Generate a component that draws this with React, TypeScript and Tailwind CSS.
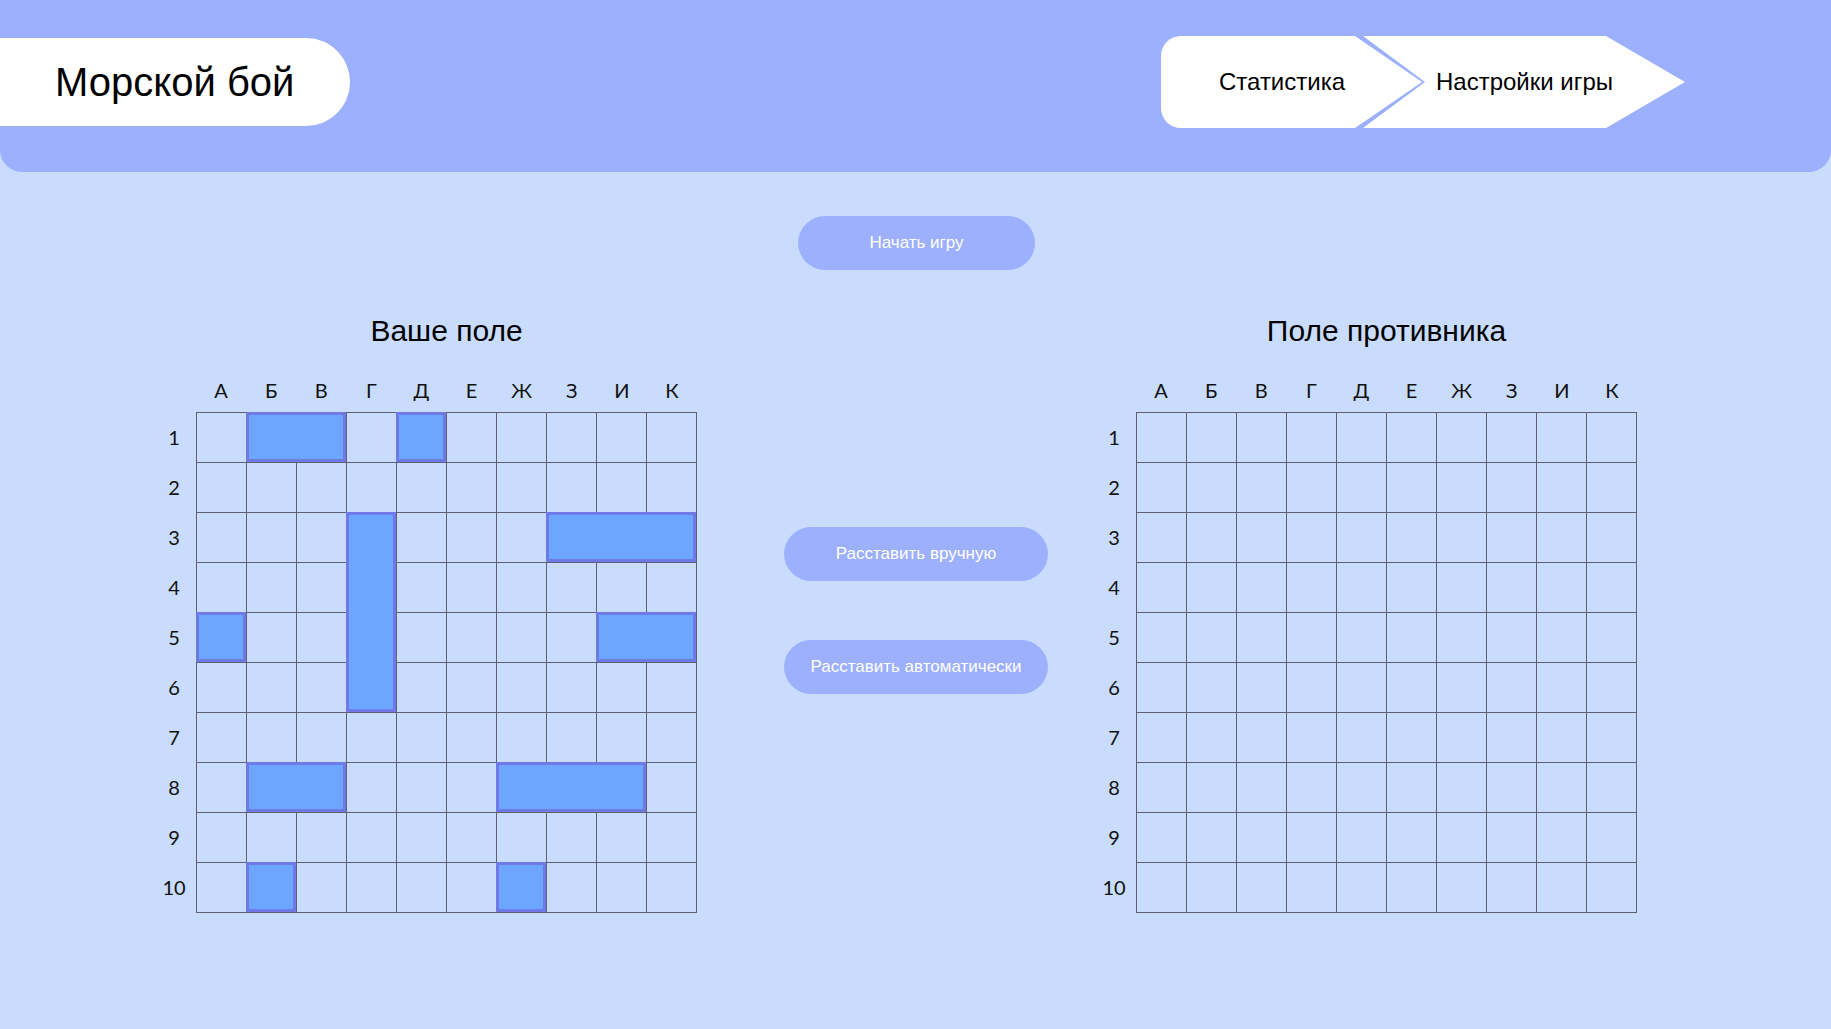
const COLS = ["А", "Б", "В", "Г", "Д", "Е", "Ж", "З", "И", "К"];
const ROWS = [1, 2, 3, 4, 5, 6, 7, 8, 9, 10];

type Ship = { c: number; r: number; len: number; vertical?: boolean };

const myShips: Ship[] = [
  { c: 1, r: 0, len: 2 },
  { c: 4, r: 0, len: 1 },
  { c: 3, r: 2, len: 4, vertical: true },
  { c: 7, r: 2, len: 3 },
  { c: 0, r: 4, len: 1 },
  { c: 8, r: 4, len: 2 },
  { c: 1, r: 7, len: 2 },
  { c: 6, r: 7, len: 3 },
  { c: 1, r: 9, len: 1 },
  { c: 6, r: 9, len: 1 },
];

const arial = "[font-family:'Liberation_Sans',Arial,sans-serif]";
const labelFont = "[font-family:Lato,'Noto_Sans',sans-serif]";

function Field({ title, ships }: { title: string; ships: Ship[] }) {
  return (
    <div className="grid grid-cols-[44px_501px]">
      <div />
      <h2 className={`${arial} text-center text-[30px] leading-[36px] text-black`}>{title}</h2>

      <div />
      <div className={`${labelFont} mt-[29px] mb-[10px] grid grid-cols-10 text-[20px] leading-[24px] text-[#111]`}>
        {COLS.map((c) => (
          <div key={c} className="text-center">{c}</div>
        ))}
      </div>

      <div className={`${labelFont} flex flex-col text-[20px] text-[#111]`}>
        {ROWS.map((n) => (
          <div key={n} className="h-[50px] flex items-center justify-center">{n}</div>
        ))}
      </div>
      <div className="relative grid grid-cols-[repeat(10,50px)] border-l border-t border-[#5f6170] w-[501px]">
        {ROWS.map((r) =>
          COLS.map((c) => (
            <div key={`${r}-${c}`} className="h-[50px] border-r border-b border-[#5f6170]" />
          ))
        )}
        {ships.map((s, i) => (
          <div
            key={i}
            className="absolute border-[3px] border-[#7079e8] bg-[#6ca6ff]"
            style={{
              left: s.c * 50 - 1,
              top: s.r * 50 - 1,
              width: (s.vertical ? 1 : s.len) * 50,
              height: (s.vertical ? s.len : 1) * 50,
            }}
          />
        ))}
      </div>
    </div>
  );
}

function PillButton({ children }: { children: React.ReactNode }) {
  return (
    <button className={`${arial} w-full h-[54px] rounded-full bg-[#9db0fd] text-white text-[17px]`}>
      {children}
    </button>
  );
}

export default function App() {
  return (
    <div className="min-h-screen bg-[#c9dcfd]">
      {/* Header */}
      <header className="flex justify-between items-start h-[172px] bg-[#9db0fd] rounded-b-[22px]">
        <div className={`${arial} mt-[38px] h-[88px] w-[350px] flex items-center pl-[55px] bg-white rounded-r-full text-[40px] text-black`}>
          Морской бой
        </div>
        <nav className={`${arial} mt-[36px] mr-[146px] flex text-[24px] text-black`}>
          <div className="h-[92px] w-[261px] flex items-center pl-[58px] bg-white rounded-l-[20px] [clip-path:polygon(0_0,194px_0,261px_50%,194px_100%,0_100%)]">
            Статистика
          </div>
          <div className="-ml-[59px] h-[92px] w-[322px] flex items-center pl-[73px] bg-white [clip-path:polygon(0_0,243px_0,322px_50%,243px_100%,0_100%,62px_50%)]">
            Настройки игры
          </div>
        </nav>
      </header>

      {/* Start */}
      <div className="flex justify-center mt-[44px]">
        <div className="w-[237px] ml-[2px]">
          <PillButton>Начать игру</PillButton>
        </div>
      </div>

      {/* Boards */}
      <main className="flex items-start mt-[43px] pl-[152px]">
        <Field title="Ваше поле" ships={myShips} />
        <div className="w-[264px] ml-[87px] mr-[44px] pt-[214px] flex flex-col gap-[59px]">
          <PillButton>Расставить вручную</PillButton>
          <PillButton>Расставить автоматически</PillButton>
        </div>
        <Field title="Поле противника" ships={[]} />
      </main>
    </div>
  );
}
